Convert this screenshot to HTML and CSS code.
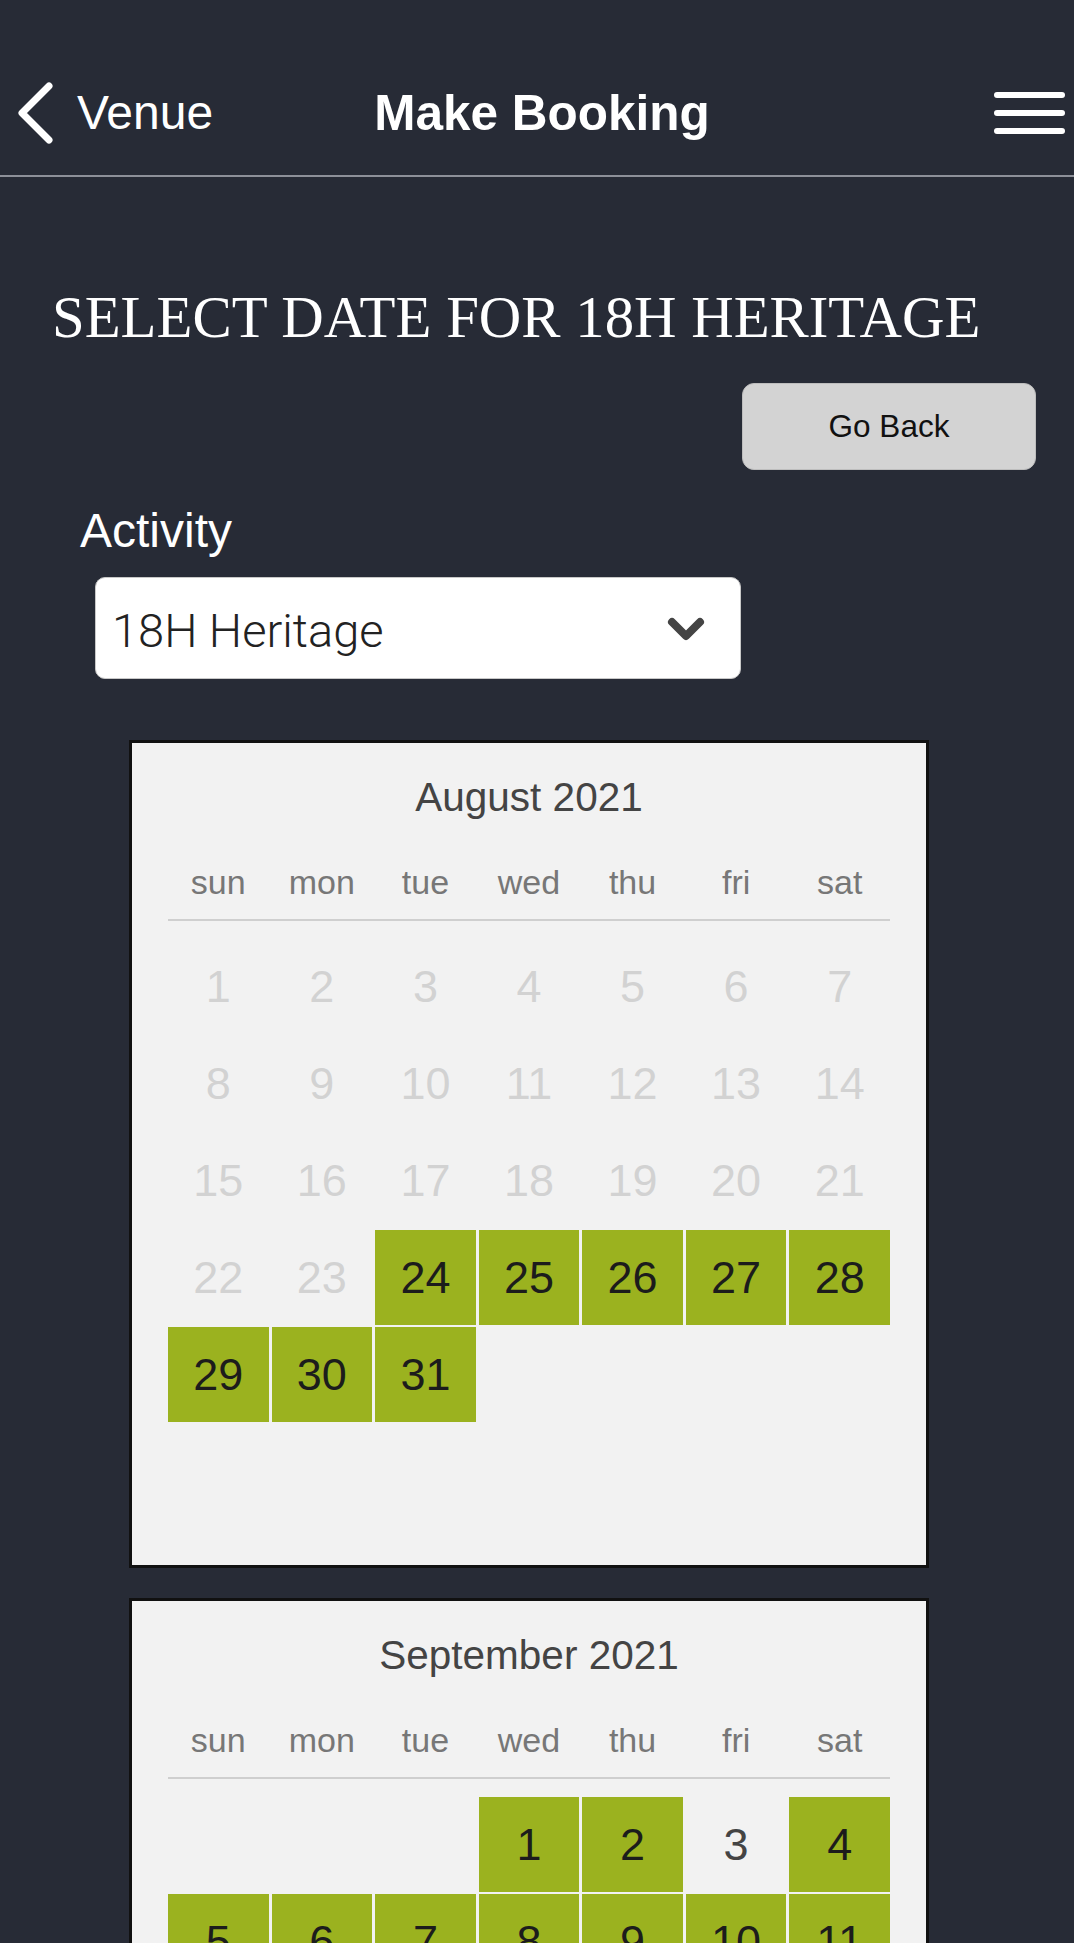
FILE: index.html
```html
<!DOCTYPE html>
<html lang="en">
  <head>
    <meta charset="UTF-8" />
    <meta name="viewport" content="width=device-width, initial-scale=1.0" />
    <title>Make Booking</title>
    <link rel="stylesheet" href="styles.css">
  </head>
  <body>
    <header class="topbar">
      <a class="back" href="#">
        <svg width="38" height="62" viewBox="0 0 38 62">
          <path d="M33 4 L6 31 L33 58" fill="none" stroke="#fff" stroke-width="7" stroke-linecap="round" stroke-linejoin="round" />
        </svg>
        Venue
      </a>
      <h2 class="topbar-title">Make Booking</h2>
      <button class="menu" type="button">
        <span></span><span></span><span></span>
      </button>
    </header>

    <main>
      <h1 class="page-title">SELECT DATE FOR 18H HERITAGE</h1>
      <div class="actions">
        <button class="go-back" type="button">Go Back</button>
      </div>

      <label class="field-label" for="activity">Activity</label>
      <div class="select">
        <span class="select-value">18H Heritage</span>
        <svg width="40" height="26" viewBox="0 0 40 26">
          <path d="M6 5 L20 19 L34 5" fill="none" stroke="#444" stroke-width="8" stroke-linecap="round" stroke-linejoin="round" />
        </svg>
      </div>

      <!-- August -->
      <section class="calendar">
        <div class="month">August 2021</div>
        <div class="weekdays">
          <span>sun</span><span>mon</span><span>tue</span><span>wed</span><span>thu</span><span>fri</span><span>sat</span>
        </div>
        <div class="days">
          <span class="past">1</span><span class="past">2</span><span class="past">3</span><span class="past">4</span><span class="past">5</span><span class="past">6</span><span class="past">7</span>
          <span class="past">8</span><span class="past">9</span><span class="past">10</span><span class="past">11</span><span class="past">12</span><span class="past">13</span><span class="past">14</span>
          <span class="past">15</span><span class="past">16</span><span class="past">17</span><span class="past">18</span><span class="past">19</span><span class="past">20</span><span class="past">21</span>
          <span class="past">22</span><span class="past">23</span><span class="open">24</span><span class="open">25</span><span class="open">26</span><span class="open">27</span><span class="open">28</span>
          <span class="open">29</span><span class="open">30</span><span class="open">31</span>
        </div>
      </section>

      <!-- September -->
      <section class="calendar">
        <div class="month">September 2021</div>
        <div class="weekdays">
          <span>sun</span><span>mon</span><span>tue</span><span>wed</span><span>thu</span><span>fri</span><span>sat</span>
        </div>
        <div class="days">
          <span></span><span></span><span></span><span class="open">1</span><span class="open">2</span><span>3</span><span class="open">4</span>
          <span class="open">5</span><span class="open">6</span><span class="open">7</span><span class="open">8</span><span class="open">9</span><span class="open">10</span><span class="open">11</span>
          <span class="open">12</span><span class="open">13</span><span class="open">14</span><span class="open">15</span><span class="open">16</span><span>17</span><span class="open">18</span>
          <span class="open">19</span><span class="open">20</span><span class="open">21</span><span class="open">22</span><span class="open">23</span><span>24</span><span class="open">25</span>
          <span class="open">26</span><span class="open">27</span><span class="open">28</span><span class="open">29</span><span class="open">30</span>
        </div>
      </section>
    </main>
  </body>
</html>
```

FILE: styles.css
```css
body {
  margin: 0;
  background-color: #272b36;
  font-family: "Liberation Sans", Arial, sans-serif;
  color: #fff;
}

/* top bar */
.topbar {
  display: grid;
  grid-template-columns: 1fr auto 1fr;
  align-items: center;
  height: 125px;
  padding-top: 50px;
  border-bottom: 2px solid #8d9099;
}
.back {
  display: flex;
  align-items: center;
  padding-left: 16px;
  color: #fff;
  text-decoration: none;
  font-size: 48px;
}
.back svg {
  margin-right: 23px;
}
.topbar-title {
  margin: 0 0 0 10px;
  font-size: 49.5px;
  font-weight: bold;
}
.menu {
  justify-self: end;
  display: flex;
  flex-direction: column;
  gap: 12px;
  margin-right: 9px;
  padding: 0;
  background: none;
  border: none;
}
.menu span {
  display: block;
  width: 71px;
  height: 6px;
  border-radius: 3px;
  background-color: #fff;
}

/* page */
.page-title {
  margin: 108px 0 0 52px;
  font-family: "Liberation Serif", "Times New Roman", serif;
  font-size: 58.8px;
  font-weight: normal;
  line-height: 66px;
  white-space: nowrap;
}
.actions {
  display: flex;
  justify-content: flex-end;
  margin-top: 32px;
  padding-right: 38px;
}
.go-back {
  width: 294px;
  height: 87px;
  background-color: #d3d3d3;
  border: 1px solid #bdbdbd;
  border-radius: 12px;
  font-family: "Liberation Sans", Arial, sans-serif;
  font-size: 31.5px;
  color: #111;
}
.field-label {
  display: block;
  margin: 35px 0 0 80px;
  font-size: 48px;
  line-height: 52px;
}
.select {
  display: flex;
  align-items: center;
  justify-content: space-between;
  box-sizing: border-box;
  width: 646px;
  height: 102px;
  margin: 20px 0 0 95px;
  padding: 4px 34px 0 16px;
  background-color: #fff;
  border: 1px solid #c8c8c8;
  border-radius: 10px;
}
.select-value {
  font-family: Roboto, sans-serif;
  font-weight: 300;
  font-size: 47px;
  color: #222;
}

/* calendars */
.calendar {
  box-sizing: border-box;
  width: 800px;
  margin: 61px 0 0 129px;
  padding: 30px 36px 46px;
  background-color: #f2f2f2;
  border: 3px solid #111;
}
.calendar + .calendar {
  margin-top: 30px;
}
.month {
  text-align: center;
  font-size: 40.5px;
  line-height: 48px;
  color: #444;
}
.weekdays {
  display: grid;
  grid-template-columns: repeat(7, 1fr);
  column-gap: 3px;
  margin-top: 41px;
  padding-bottom: 17px;
  border-bottom: 2px solid #cfcfcf;
  font-size: 34px;
  line-height: 40px;
  color: #777;
  text-align: center;
}
.days {
  display: grid;
  grid-template-columns: repeat(7, 1fr);
  grid-template-rows: repeat(6, 95px);
  column-gap: 3px;
  row-gap: 2px;
  margin-top: 18px;
}
.days span {
  display: flex;
  align-items: center;
  justify-content: center;
  font-size: 45px;
  color: #444;
}
.days .past {
  color: #d2d2d2;
}
.days .open {
  background-color: #9bb21f;
  color: #1c1c1c;
}
```
